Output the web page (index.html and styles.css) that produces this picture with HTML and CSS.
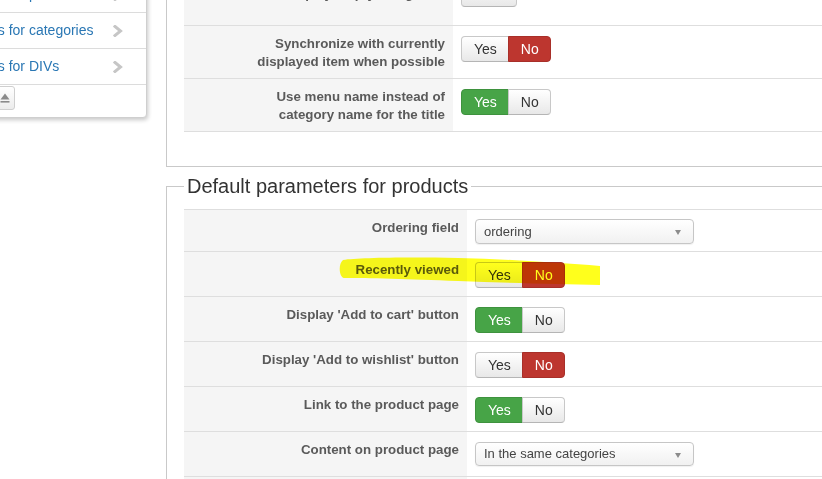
FILE: index.html
```html
<!DOCTYPE html>
<html>
<head>
<meta charset="utf-8">
<title>Parameters</title>
<link rel="stylesheet" href="styles.css">
</head>
<body>
<div class="page">
  <aside class="sidebar">
    <div class="card">
      <ul class="nav">
        <li><a href="#">Templates for products</a><svg class="chev" viewBox="0 0 10 12"><polyline points="2,1.5 7.5,6 2,10.5"/></svg></li>
        <li><a href="#">Templates for categories</a><svg class="chev" viewBox="0 0 10 12"><polyline points="2,1.5 7.5,6 2,10.5"/></svg></li>
        <li><a href="#">Templates for DIVs</a><svg class="chev" viewBox="0 0 10 12"><polyline points="2,1.5 7.5,6 2,10.5"/></svg></li>
      </ul>
      <div class="card-foot">
        <span class="tool"><svg viewBox="0 0 12 12"><polygon points="6,3 10.5,9 1.5,9"/></svg></span>
        <span class="tool"><svg viewBox="0 0 12 12"><polygon points="6,1.5 10.5,7.5 1.5,7.5"/><rect x="1.5" y="9" width="9" height="1.6"/></svg></span>
      </div>
    </div>
  </aside>

  <main class="main">
    <fieldset class="fs fs-first">
      <table class="params params-a">
        <tr class="row-partial">
          <td class="lbl">Display empty categories</td>
          <td class="val"><span class="btn btn-single">&nbsp;</span></td>
        </tr>
        <tr>
          <td class="lbl">Synchronize with currently<br>displayed item when possible</td>
          <td class="val"><span class="toggle"><span class="btn">Yes</span><span class="btn btn-no on">No</span></span></td>
        </tr>
        <tr class="last">
          <td class="lbl">Use menu name instead of<br>category name for the title</td>
          <td class="val"><span class="toggle"><span class="btn btn-yes on">Yes</span><span class="btn">No</span></span></td>
        </tr>
      </table>
    </fieldset>

    <fieldset class="fs fs-second">
      <legend>Default parameters for products</legend>
      <table class="params params-b">
        <tr class="row-select">
          <td class="lbl">Ordering field</td>
          <td class="val"><span class="select">ordering</span></td>
        </tr>
        <tr>
          <td class="lbl">Recently viewed</td>
          <td class="val"><span class="toggle"><span class="btn">Yes</span><span class="btn btn-no on">No</span></span></td>
        </tr>
        <tr>
          <td class="lbl">Display 'Add to cart' button</td>
          <td class="val"><span class="toggle"><span class="btn btn-yes on">Yes</span><span class="btn">No</span></span></td>
        </tr>
        <tr>
          <td class="lbl">Display 'Add to wishlist' button</td>
          <td class="val"><span class="toggle"><span class="btn">Yes</span><span class="btn btn-no on">No</span></span></td>
        </tr>
        <tr>
          <td class="lbl">Link to the product page</td>
          <td class="val"><span class="toggle"><span class="btn btn-yes on">Yes</span><span class="btn">No</span></span></td>
        </tr>
        <tr class="row-select-tall">
          <td class="lbl">Content on product page</td>
          <td class="val"><span class="select">In the same categories</span></td>
        </tr>
        <tr class="last">
          <td class="lbl">Number of products</td>
          <td class="val"><span class="select">10</span></td>
        </tr>
      </table>
    </fieldset>
  </main>
</div>

<svg class="highlight" viewBox="0 0 264 32" width="264" height="32">
  <path d="M5,4 C20,2 60,1 120,2 C170,3 220,7 262,10 L262,29 C220,28 170,27 120,25 C70,23 30,22 6,22 C1,21 0,8 5,4 Z"/>
</svg>
</body>
</html>
```
FILE: styles.css
```css
* { box-sizing: border-box; }

html, body {
  margin: 0;
  padding: 0;
}

body {
  width: 822px;
  height: 479px;
  overflow: hidden;
  position: relative;
  background: #fff;
  font-family: "Liberation Sans", Arial, Helvetica, sans-serif;
  font-size: 13px;
  color: #333;
}

.page {
  display: flex;
  align-items: flex-start;
  margin-top: -40px;
}

/* ---------- sidebar card ---------- */
.sidebar {
  flex: none;
  width: 222px;
  margin-left: -75px;
  margin-right: 19px;
  padding-top: 16px;
}

.card {
  background: #fff;
  border: 1px solid #cfcfcf;
  border-radius: 0 0 4px 4px;
  box-shadow: 1px 2px 4px rgba(0, 0, 0, 0.22);
}

.nav {
  list-style: none;
  margin: 0;
  padding: 0;
}

.nav li {
  display: flex;
  align-items: center;
  justify-content: space-between;
  padding: 8px 23px 8px 15px;
  line-height: 19px;
  font-size: 14px;
  border-bottom: 1px solid #dcdcdc;
}

.nav a {
  color: #2a77b4;
  text-decoration: none;
}

.chev {
  width: 10px;
  height: 12px;
  fill: none;
  stroke: #c6c6c6;
  stroke-width: 3;
  stroke-linecap: square;
}

.card-foot {
  display: flex;
  gap: 4px;
  padding: 1px 0 7px 45px;
}

.tool {
  display: flex;
  align-items: center;
  justify-content: center;
  width: 20px;
  height: 24px;
  border: 1px solid #cfcfcf;
  border-radius: 3px;
  background: linear-gradient(#ffffff, #ececec);
}

.tool svg {
  width: 12px;
  height: 12px;
  fill: #8a8a8a;
}

/* ---------- fieldsets ---------- */
.main {
  flex: none;
  width: 720px;
}

.fs {
  margin: 0;
  min-width: 0;
  border: 1px solid #c9c9c9;
}

.fs-first {
  padding: 14px 17px 34px;
}

.fs-second {
  margin-top: 7px;
  padding: 11px 17px 20px;
}

.fs legend {
  padding: 0 3px;
  font-size: 20px;
  line-height: 24px;
  color: #333;
}

/* ---------- parameter tables ---------- */
.params {
  width: 100%;
  border-collapse: separate;
  border-spacing: 0;
}

.params td {
  border-top: 1px solid #dedede;
  vertical-align: top;
}

.params tr.last td {
  border-bottom: 1px solid #dedede;
}

.lbl {
  background: #f5f5f5;
  text-align: right;
  font-weight: bold;
  font-size: 13.3px;
  color: #5a5a5a;
  line-height: 18px;
  padding: 9px 8px 7px;
}

.params-a .lbl { width: 269px; }
.params-b .lbl { width: 283px; }

.val {
  background: #fff;
  padding: 10px 8px 8px;
}

.row-partial .val { padding: 5px 8px 18px; }
.row-select .val { padding: 9px 8px 7px; }
.row-select-tall .val { padding: 10px 8px 10px; }

/* ---------- toggle buttons ---------- */
.toggle {
  display: inline-flex;
}

.btn {
  display: inline-block;
  height: 26px;
  padding: 3px 11px 3px 12px;
  font-size: 14px;
  line-height: 18px;
  color: #333;
  background: linear-gradient(#ffffff, #e8e8e8);
  border: 1px solid #c8c8c8;
  border-bottom-color: #b5b5b5;
}

.toggle .btn:first-child {
  border-radius: 4px 0 0 4px;
}

.toggle .btn + .btn {
  margin-left: -1px;
  border-radius: 0 4px 4px 0;
}

.btn-single {
  width: 56px;
  border-radius: 4px;
}

.btn-yes.on {
  background: #47a447;
  border-color: #3e923e;
  color: #fff;
}

.btn-no.on {
  background: #bd362f;
  border-color: #a82f29;
  color: #fff;
}

/* ---------- select ---------- */
.select {
  position: relative;
  display: block;
  width: 219px;
  height: 25px;
  padding: 0 8px;
  line-height: 23px;
  font-size: 13px;
  color: #444;
  border: 1px solid #c6c6c6;
  border-radius: 4px;
  background: linear-gradient(#ffffff, #f1f1f1);
  box-shadow: 0 1px 1px rgba(0, 0, 0, 0.06);
}

.select::after {
  content: "";
  position: absolute;
  right: 12px;
  top: 10px;
  border-left: 3.5px solid transparent;
  border-right: 3.5px solid transparent;
  border-top: 5px solid #8c8c8c;
}

.row-select-tall .select {
  height: 24px;
  line-height: 22px;
}

/* ---------- marker highlight ---------- */
.highlight {
  position: absolute;
  left: 338px;
  top: 256px;
  mix-blend-mode: multiply;
  fill: #ffff1c;
}
```
